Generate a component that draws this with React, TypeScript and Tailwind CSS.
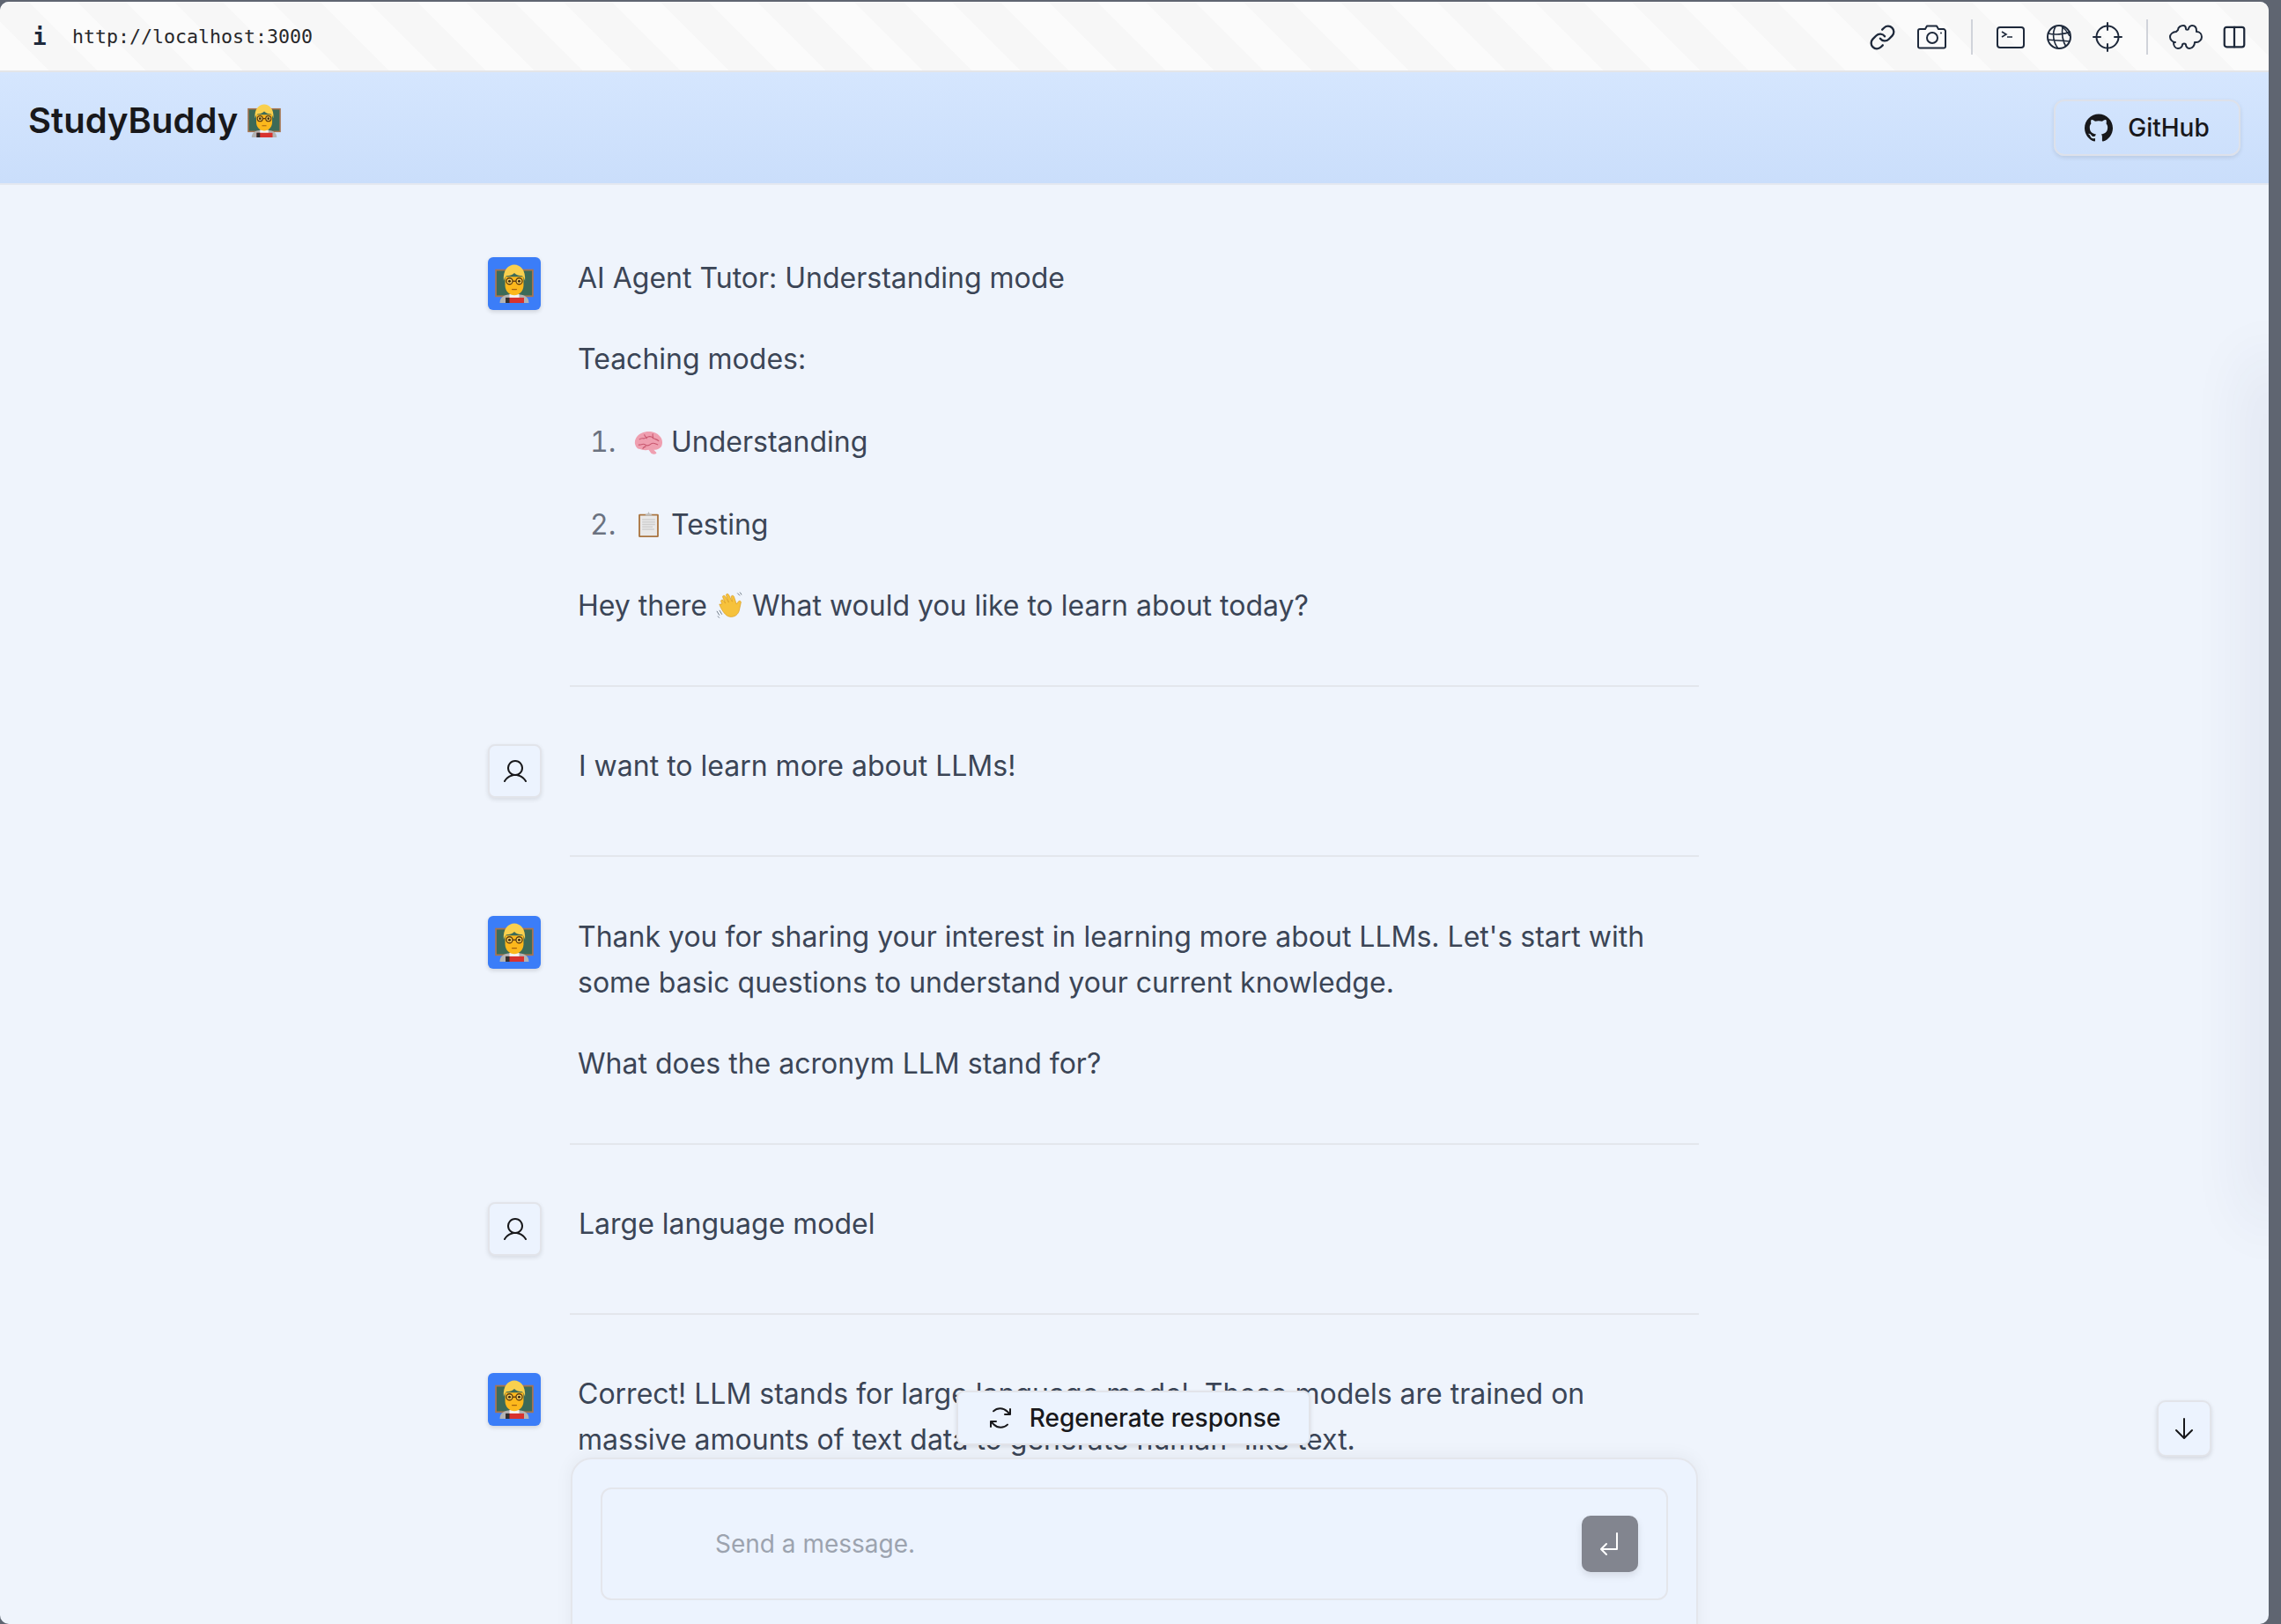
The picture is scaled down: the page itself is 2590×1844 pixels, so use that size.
import React from "react";
import { Columns2, Link } from "lucide-react";
import { PiArrowDown, PiArrowElbowDownLeft, PiArrowsClockwise, PiUser } from "react-icons/pi";
import { SiGithub } from "react-icons/si";

const Teacher = ({ className }: { className: string }) => (
  <svg viewBox="0 0 40 40" className={className}>
    <rect x="1" y="6" width="38" height="27" fill="#3c6a58" stroke="#a9754f" strokeWidth="1.600" />
    <path d="M5 40c0-7 6-9 15-9s15 2 15 9z" fill="#b3b3b3" />
    <rect x="15" y="31" width="10" height="4" fill="#f3f3f3" />
    <rect x="11" y="34.500" width="19" height="5.500" fill="#d8322f" />
    <rect x="11" y="34.500" width="4" height="5.500" fill="#2f2f2f" />
    <path d="M10.500 13h19v9c0 6-5 10-9.500 10S10.500 28 10.500 22z" fill="#fcb81c" />
    <path d="M9 17C8 6 14 0.500 20 0.500S32 6 31 17c-1-2-1-4-3-5-3 0-6-1-8-3-2 2-5 3-8 3-2 1-2 3-3 5z" fill="#f9d04e" />
    <circle cx="15" cy="17.500" r="3.200" fill="#fcd45c" stroke="#5d3b10" strokeWidth="1.200" />
    <circle cx="25" cy="17.500" r="3.200" fill="#fcd45c" stroke="#5d3b10" strokeWidth="1.200" />
    <path d="M18.200 17.500h3.600" stroke="#5d3b10" strokeWidth="1.200" />
    <circle cx="15" cy="17.500" r="1.400" fill="#3b2a16" />
    <circle cx="25" cy="17.500" r="1.400" fill="#3b2a16" />
    <path d="M17.800 26h4.400" stroke="#a5620f" strokeWidth="1.200" strokeLinecap="round" />
  </svg>
);

const Brain = () => (
  <svg viewBox="0 0 34 28" className="inline-block h-[28px] w-[33px] align-[-4px]">
    <path d="M1 15C0 8 6 2 13 1c6-1 13 0 17 5 4 4 4 11 0 14-2 2-5 2-7 2l3 3c1 2-3 3-6 1l-3-4c-4 1-8 0-11-1-2 0-4-2-5-6z" fill="#ef9fb0" />
    <path d="M6 10c3-3 5 0 8-2s6-2 8 0 5 1 7 4M5 16c3 1 5-2 8 0s5 1 7-1 5 0 8 1M12 4c0 3 3 3 3 5M22 3c-1 3 1 4 0 6M10 21c1-2 2-3 4-3" fill="none" stroke="#c9576f" strokeWidth="1.100" />
  </svg>
);

const Clipboard = () => (
  <svg viewBox="0 0 30 34" className="inline-block h-[31px] w-[33px] align-[-4px]">
    <rect x="2.500" y="4" width="25" height="29" rx="1.500" fill="#a9743f" />
    <rect x="4.500" y="6" width="21" height="25" fill="#e9e9e9" />
    <path d="M7 11h16M7 14h16M7 17h16M7 20h13M7 23h15" stroke="#cfcfcf" strokeWidth="1.600" />
    <path d="M10 6l2-2h1.500L15 1l1.500 3H18l2 2z" fill="#bdbdbd" />
  </svg>
);

const Wave = () => (
  <svg viewBox="0 0 34 34" className="inline-block h-[34px] w-[33px] align-[-6px]">
    <path d="M8 15l-1-3c-1-2 2-3 3-1l2 3-3-7c-1-2 2-3 3-1l4 7-3-8c-1-2 2-3 3-1l4 8-1-5c-1-2 2-3 3-1l3 9 2-3c2-2 4 0 3 2l-2 9c-2 6-8 8-13 6-4-2-8-8-10-14z" fill="#f6c23c" stroke="#d99a1e" strokeWidth=".7" />
    <path d="M2 23l3 5M5 22l3 5M3 29l2 2M26 2l3 3M29 1l2 3" stroke="#6f7a86" strokeWidth="1" fill="none" />
  </svg>
);

const Avatar = ({ bot }: { bot?: boolean }) =>
  bot ? (
    <div className="mt-[2px] flex h-[60px] w-[60px] shrink-0 items-center justify-center rounded-[6px] bg-[#3b7df8] shadow-[0_2px_5px_rgba(0,0,0,0.14)]">
      <Teacher className="h-[44px] w-[44px]" />
    </div>
  ) : (
    <div className="mb-[1px] mt-[1px] flex h-[61px] w-[61px] shrink-0 items-center justify-center rounded-[8px] border-2 border-[#e2e4ea] bg-[#ecf3fe] shadow-[0_2px_5px_rgba(0,0,0,0.1)]">
      <PiUser size={32} color="#18181b" />
    </div>
  );

const Row = ({ bot, children, last, pt }: { bot?: boolean; children: React.ReactNode; last?: boolean; pt: string }) => (
  <div className={pt + (last ? "" : " border-b-2 border-[#e3e6ec] pb-[64px]")}>
    <div className="ml-[-93px] flex items-start gap-[42px]">
      <Avatar bot={bot} />
      <div className="min-w-0 flex-1 text-[32px] leading-[52px] text-[#3b4556]">{children}</div>
    </div>
  </div>
);

const CameraIcon = () => (
  <svg viewBox="0 0 34 28" width="34" height="28" fill="none" stroke="#1e293b" strokeWidth="2">
    <path d="M3 5h6l2-3.500h11l2 3.500h6a3 3 0 0 1 2 2v17a2 2 0 0 1-2 2.500H3a2 2 0 0 1-2-2.500V7a2 2 0 0 1 2-2z" strokeLinejoin="round" />
    <circle cx="17" cy="15" r="6" />
    <circle cx="27" cy="9.500" r="1" fill="#1e293b" stroke="none" />
  </svg>
);
const TerminalIcon = () => (
  <svg viewBox="0 0 32 25" width="32" height="25" fill="none" stroke="#1e293b" strokeWidth="2">
    <rect x="1" y="1" width="30" height="23" rx="3" />
    <path d="M6 6l5 3-5 3M12 12h6" strokeWidth="1.600" />
  </svg>
);
const GlobeIcon = () => (
  <svg viewBox="0 0 28 28" width="28" height="28" fill="none" stroke="#1e293b" strokeWidth="1.600">
    <circle cx="14" cy="14" r="13" strokeWidth="2" />
    <path d="M2 10c6 2 18 1 25-2M1 17c8 1 17 1 25 2M10 2c-4 7-3 18 3 25M18 1c-1 8 0 18 4 24M16 1c5 4 8 8 10 12" />
  </svg>
);
const CrosshairIcon = () => (
  <svg viewBox="0 0 34 34" width="34" height="34" fill="none" stroke="#1e293b" strokeWidth="2">
    <circle cx="17" cy="17" r="12.500" />
    <path d="M17 1v8M17 25v8M1 17h8M25 17h8" strokeLinecap="round" />
  </svg>
);
const PuzzleIcon = () => (
  <svg viewBox="0 0 38 28" width="38" height="28" fill="none" stroke="#1e293b" strokeWidth="2" strokeLinejoin="round">
    <path d="M10 6c0-3 3-5 6-5 2 0 3 2 3 4 0 1 3 1 3 0 0-2 2-4 4-4 3 0 5 2 5 6v1c4 0 6 3 6 6s-3 6-6 6h-2c0 3-2 7-6 7-3 0-4-3-4-4 0-2-4-2-4 0 0 1-1 4-5 4-3 0-5-3-5-7H7c-3 0-6-3-6-6s3-6 7-6z" />
  </svg>
);
const Sep = () => <div className="h-[40px] w-[2px] bg-[#d0d3da]" />;
const TB = ({ children }: { children: React.ReactNode }) => (
  <div className="flex w-[40px] items-center justify-center text-[#1e293b]">{children}</div>
);

export default function App() {
  return (
    <div className="relative h-[1844px] w-[2590px] overflow-hidden bg-[#5f6571] pr-[14px] pt-[2px] font-['Inter',sans-serif]">
      <div className="relative flex h-full flex-col overflow-hidden rounded-[10px] bg-[#eff4fc]">
        <div className="flex h-[80px] shrink-0 items-center border-b-2 border-[#e4e5e8] bg-[repeating-linear-gradient(45deg,#fbfbfb_0,#fbfbfb_39px,#f7f7f7_39px,#f7f7f7_78px)] pr-[19px] pt-[2px]">
          <span className="ml-[37px] w-[45px] font-['DejaVu_Sans_Mono',monospace] text-[26px] font-bold text-[#1e293b]">i</span>
          <span className="font-['DejaVu_Sans_Mono',monospace] text-[21.6px] text-[#27272a]">http://localhost:3000</span>
          <div className="ml-auto flex items-center">
            <TB><Link size={31} strokeWidth={1.8} /></TB>
            <div className="ml-[17px]"><TB><CameraIcon /></TB></div>
            <div className="ml-[24px]"><Sep /></div>
            <div className="ml-[23px]"><TB><TerminalIcon /></TB></div>
            <div className="ml-[15px]"><TB><GlobeIcon /></TB></div>
            <div className="ml-[15px]"><TB><CrosshairIcon /></TB></div>
            <div className="ml-[24px]"><Sep /></div>
            <div className="ml-[23px]"><TB><PuzzleIcon /></TB></div>
            <div className="ml-[15px]"><TB><Columns2 size={30} strokeWidth={1.8} /></TB></div>
          </div>
        </div>
        <div className="flex h-[128px] shrink-0 items-start justify-between border-b-2 border-[#e4e8f0] bg-gradient-to-b from-[#d5e6fe] to-[#cadefb] pl-[32px] pr-[32px]">
          <div className="mt-[28px] flex items-center gap-[11px] text-[40px] font-semibold leading-[54px] text-[#18181b]">
            StudyBuddy
            <Teacher className="h-[38px] w-[38px]" />
          </div>
          <div className="mt-[31px] flex h-[64px] w-[212px] items-center justify-center gap-[17px] rounded-[12px] border-2 border-[#dde1ea] shadow-[0_2px_5px_rgba(0,0,0,0.1)]">
            <SiGithub size={32} color="#18181b" />
            <span className="text-[28px] font-medium leading-none text-[#18181b]">GitHub</span>
          </div>
        </div>
        <div className="min-h-0 flex-1 overflow-hidden">
          <div className="mx-auto w-[1282px]">
            <Row bot pt="pt-[80px]">
              <p>AI Agent Tutor: Understanding mode</p>
              <p className="mt-[40px]">Teaching modes:</p>
              <ol className="list-decimal pl-[52px] marker:text-[#6b7280]">
                <li className="mt-[42px] pl-[12px]"><Brain /> Understanding</li>
                <li className="mt-[42px] pl-[12px]"><Clipboard /> Testing</li>
              </ol>
              <p className="mt-[40px]">Hey there <Wave /> What would you like to learn about today?</p>
            </Row>
            <Row pt="pt-[64px]"><p>I want to learn more about LLMs!</p></Row>
            <Row bot pt="pt-[65px]">
              <p>Thank you for sharing your interest in learning more about LLMs. Let's start with some basic questions to understand your current knowledge.</p>
              <p className="mt-[40px]">What does the acronym LLM stand for?</p>
            </Row>
            <Row pt="pt-[64px]"><p>Large language model</p></Row>
            <Row bot last pt="pt-[64px]">
              <p>Correct! LLM stands for large language model. These models are trained on massive amounts of text data to generate human-<span className="ml-[5px]">like text.</span></p>
            </Row>
          </div>
        </div>
        <div className="absolute right-[-2px] top-[420px] h-[950px] w-[2px] shadow-[0_0_70px_12px_rgba(40,50,90,0.14)]" />
        <div className="absolute right-[65px] top-[1588px] flex h-[64px] w-[62px] items-center justify-center rounded-[10px] border-2 border-[#e2e4ea] bg-[#ecf3fe] shadow-[0_2px_5px_rgba(0,0,0,0.12)]">
          <PiArrowDown size={32} color="#18181b" />
        </div>
        <div className="absolute left-[1086px] top-[1577px] flex h-[62px] w-[402px] items-center justify-center gap-[17px] rounded-[8px] border-2 border-[#e2e4ea] bg-[#ecf3fe] shadow-[0_2px_5px_rgba(0,0,0,0.1)]">
          <PiArrowsClockwise size={32} color="#18181b" />
          <span className="text-[28px] font-medium leading-none text-[#18181b]">Regenerate response</span>
        </div>
        <div className="absolute bottom-[-20px] left-[648px] h-[209px] w-[1280px] rounded-t-[24px] border-2 border-[#e4e6ec] bg-[#ecf3fe] px-[32px] pt-[32px] shadow-[0_-2px_20px_rgba(0,0,0,0.05)]">
          <div className="flex h-[128px] items-center rounded-[12px] border-2 border-[#e4e6ec] pl-[128px] pr-[32px]">
            <span className="text-[28px] leading-none text-[#9ca3af]">Send a message.</span>
            <div className="ml-auto flex h-[64px] w-[64px] items-center justify-center rounded-[10px] bg-[#82858f] shadow-[0_4px_8px_rgba(0,0,0,0.1)]">
              <PiArrowElbowDownLeft size={32} color="#ffffff" />
            </div>
          </div>
        </div>
      </div>
    </div>
  );
}
